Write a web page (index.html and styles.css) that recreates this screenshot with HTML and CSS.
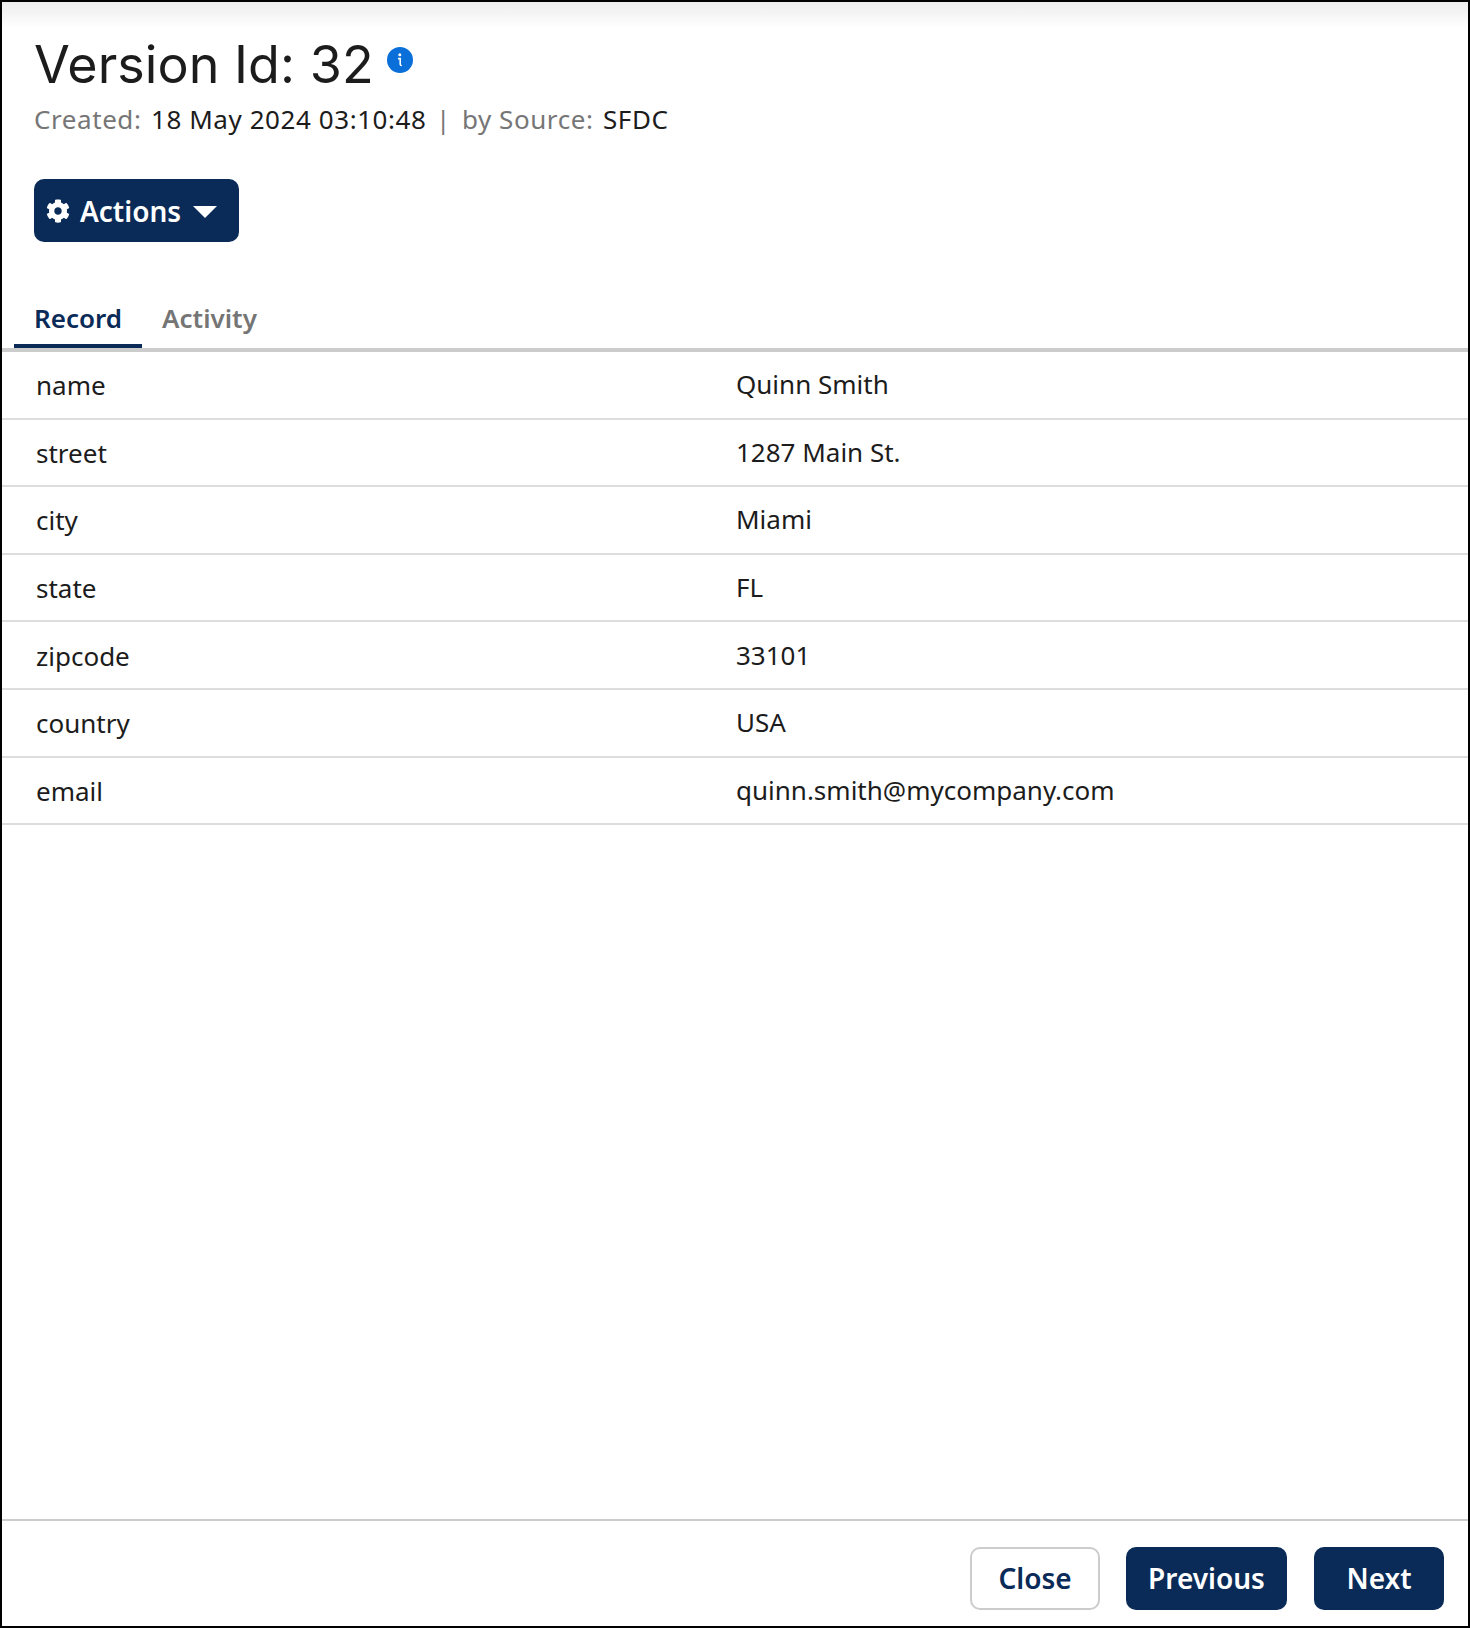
FILE: index.html
```html
<!DOCTYPE html>
<html lang="en">
<head>
    <meta charset="UTF-8">
    <meta name="viewport" content="width=device-width, initial-scale=1.0">
    <title>Version Id: 32</title>
    <link rel="stylesheet" href="styles.css">
</head>
<body>
    <div class="modal">
        <div class="modal-header">
            <div class="title-row">
                <h1>Version Id: 32</h1>
                <svg class="info-icon" viewBox="0 0 26 26">
                    <circle cx="13" cy="13" r="13" fill="#0a6fd8"/>
                    <circle cx="12.8" cy="7.8" r="1.5" fill="#fff"/>
                    <path d="M11 11.6h2.2v5.6c0 .9.4 1.3 1.6 1.3" fill="none" stroke="#fff" stroke-width="1.6"/>
                </svg>
            </div>
            <p class="meta">
                <span class="meta-label">Created:</span>
                <span>18 May 2024 03:10:48</span>
                <span class="meta-sep">|</span>
                <span class="meta-label">by Source:</span>
                <span>SFDC</span>
            </p>
            <button type="button" class="btn btn-primary actions-button">
                <svg class="gear-icon" viewBox="0 0 512 512">
                    <path fill="#fff" d="M487.4 315.7l-42.6-24.6c4.3-23.2 4.3-47 0-70.2l42.6-24.6c4.9-2.8 7.1-8.6 5.5-14-11.1-35.6-30-67.8-54.7-94.6-3.8-4.1-10-5.1-14.8-2.3L380.8 110c-17.9-15.4-38.5-27.3-60.8-35.1V25.8c0-5.6-3.9-10.5-9.4-11.7-36.7-8.2-74.3-7.8-109.2 0-5.5 1.2-9.4 6.1-9.4 11.7V75c-22.2 7.9-42.8 19.8-60.8 35.1L88.7 85.5c-4.9-2.8-11-1.9-14.8 2.3-24.7 26.7-43.6 58.9-54.7 94.6-1.7 5.4.6 11.2 5.5 14L67.3 221c-4.3 23.2-4.3 47 0 70.2l-42.6 24.6c-4.9 2.8-7.1 8.6-5.5 14 11.1 35.6 30 67.8 54.7 94.6 3.8 4.1 10 5.1 14.8 2.3l42.6-24.6c17.9 15.4 38.5 27.3 60.8 35.1v49.2c0 5.6 3.9 10.5 9.4 11.7 36.7 8.2 74.3 7.8 109.2 0 5.5-1.2 9.4-6.1 9.4-11.7v-49.2c22.2-7.9 42.8-19.8 60.8-35.1l42.6 24.6c4.9 2.8 11 1.9 14.8-2.3 24.7-26.7 43.6-58.9 54.7-94.6 1.5-5.5-.7-11.3-5.6-14.1zM256 336c-44.1 0-80-35.9-80-80s35.9-80 80-80 80 35.9 80 80-35.9 80-80 80z"/>
                </svg>
                <span>Actions</span>
                <span class="caret"></span>
            </button>
        </div>

        <div class="tabs">
            <div class="tab tab-active">Record</div>
            <div class="tab">Activity</div>
        </div>

        <div class="record-table">
            <div class="record-row"><span class="field">name</span><span class="value">Quinn Smith</span></div>
            <div class="record-row"><span class="field">street</span><span class="value">1287 Main St.</span></div>
            <div class="record-row"><span class="field">city</span><span class="value">Miami</span></div>
            <div class="record-row"><span class="field">state</span><span class="value">FL</span></div>
            <div class="record-row"><span class="field">zipcode</span><span class="value">33101</span></div>
            <div class="record-row"><span class="field">country</span><span class="value">USA</span></div>
            <div class="record-row"><span class="field">email</span><span class="value">quinn.smith@mycompany.com</span></div>
        </div>

        <div class="modal-footer">
            <button type="button" class="btn btn-outline close-button">Close</button>
            <button type="button" class="btn btn-primary previous-button">Previous</button>
            <button type="button" class="btn btn-primary next-button">Next</button>
        </div>
    </div>
</body>
</html>
```

FILE: styles.css
```css
* {
    box-sizing: border-box;
}
body {
    font-family: "Noto Sans", "Open Sans", sans-serif;
    margin: 0;
    color: #1c1c1c;
    background-color: #fff;
}
.modal {
    height: 1628px;
    border: 2px solid #000;
    display: flex;
    flex-direction: column;
    background: linear-gradient(#ececec, #fff 26px);
}
.modal-header {
    padding: 28px 32px 0;
}
.title-row {
    display: flex;
    align-items: flex-start;
    gap: 13px;
}
h1 {
    margin: 0;
    font-family: Inter, sans-serif;
    font-size: 52px;
    line-height: 70px;
    font-weight: 400;
    letter-spacing: 0.05px;
}
.info-icon {
    width: 26px;
    height: 26px;
    margin-top: 17px;
}
.meta {
    margin: 1px 0 0;
    font-size: 26px;
    letter-spacing: 0.57px;
    line-height: 36px;
    display: flex;
    gap: 9.5px;
}
.meta-label,
.meta-sep {
    color: #767676;
}
.meta-sep {
    margin-right: 1.5px;
}
.btn {
    font-family: inherit;
    font-size: 28px;
    font-weight: 600;
    border-radius: 10px;
    border: none;
    cursor: pointer;
    height: 63px;
    padding-bottom: 2px;
}
.btn-primary {
    background-color: #0a2b57;
    color: #fff;
}
.btn-outline {
    background-color: #fff;
    color: #0a2b57;
    border: 2px solid #ccc;
}
.actions-button {
    margin-top: 42px;
    width: 205px;
    display: flex;
    align-items: center;
    padding: 0 12px;
    gap: 10px;
    font-weight: 600;
}
.gear-icon {
    width: 24px;
    height: 24px;
}
.caret {
    width: 0;
    height: 0;
    margin-left: 2px;
    margin-top: 3px;
    border-left: 12px solid transparent;
    border-right: 12px solid transparent;
    border-top: 12px solid #fff;
}
.tabs {
    margin-top: 53px;
    padding-left: 12px;
    display: flex;
    border-bottom: 4px solid #ccc;
}
.tab {
    padding: 0 20px;
    height: 53px;
    line-height: 46px;
    font-size: 26px;
    font-weight: 600;
    color: #757575;
}
.tab-active {
    color: #0a2b57;
    border-bottom: 4px solid #0a2b57;
}
.record-table {
    flex: 1;
}
.record-row {
    display: grid;
    grid-template-columns: 700px 1fr;
    height: 67.6px;
    align-items: center;
    padding: 1px 0 0 34px;
    border-bottom: 2px solid #ddd;
    font-size: 26px;
}
.value {
    margin-top: -2px;
}
.modal-footer {
    height: 107px;
    border-top: 2px solid #ccc;
    display: flex;
    justify-content: flex-end;
    align-items: flex-start;
    padding: 26px 24px 0 0;
    gap: 26px;
}
.close-button {
    width: 130px;
}
.previous-button {
    width: 161px;
}
.next-button {
    width: 130px;
    margin-left: 1px;
}
```
